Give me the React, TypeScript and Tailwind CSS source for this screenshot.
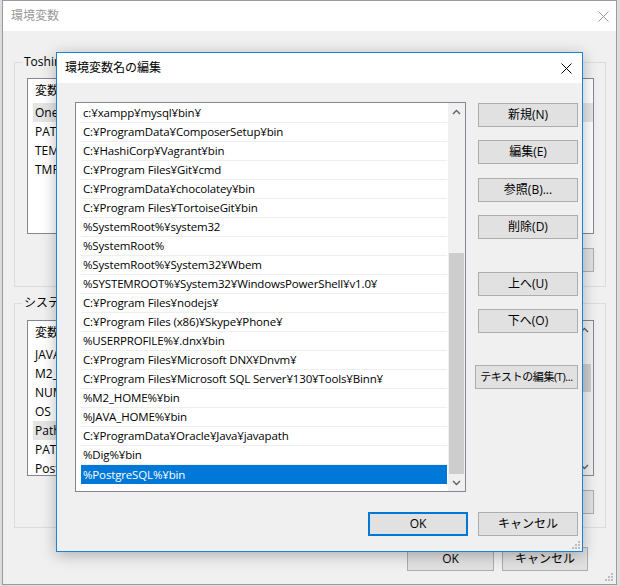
import React from "react";

const paths = [
  "c:¥xampp¥mysql¥bin¥",
  "C:¥ProgramData¥ComposerSetup¥bin",
  "C:¥HashiCorp¥Vagrant¥bin",
  "C:¥Program Files¥Git¥cmd",
  "C:¥ProgramData¥chocolatey¥bin",
  "C:¥Program Files¥TortoiseGit¥bin",
  "%SystemRoot%¥system32",
  "%SystemRoot%",
  "%SystemRoot%¥System32¥Wbem",
  "%SYSTEMROOT%¥System32¥WindowsPowerShell¥v1.0¥",
  "C:¥Program Files¥nodejs¥",
  "C:¥Program Files (x86)¥Skype¥Phone¥",
  "%USERPROFILE%¥.dnx¥bin",
  "C:¥Program Files¥Microsoft DNX¥Dnvm¥",
  "C:¥Program Files¥Microsoft SQL Server¥130¥Tools¥Binn¥",
  "%M2_HOME%¥bin",
  "%JAVA_HOME%¥bin",
  "C:¥ProgramData¥Oracle¥Java¥javapath",
  "%Dig%¥bin",
  "%PostgreSQL%¥bin",
];

const F = "font-['Open_Sans','Noto_Sans_CJK_JP',sans-serif]";

function CloseX({ color }: { color: string }) {
  return (
    <svg width="11" height="11" viewBox="0 0 11 11">
      <path d="M0.5 0.5 L10.5 10.5 M10.5 0.5 L0.5 10.5" stroke={color} strokeWidth="1" />
    </svg>
  );
}

function Chevron({ up }: { up?: boolean }) {
  return (
    <svg width="9" height="6" viewBox="0 0 9 6">
      <path
        d={up ? "M1 5 L4.5 1.5 L8 5" : "M1 1 L4.5 4.5 L8 1"}
        stroke="#606060"
        strokeWidth="1.4"
        fill="none"
      />
    </svg>
  );
}

function Grip() {
  return (
    <svg width="8" height="8" viewBox="0 0 8 8">
      {[
        [6, 0],
        [6, 3],
        [3, 3],
        [6, 6],
        [3, 6],
        [0, 6],
      ].map(([x, y], i) => (
        <rect key={i} x={x} y={y} width="2" height="2" fill="#bdbdbd" />
      ))}
    </svg>
  );
}

function WinButton({
  label,
  className = "",
}: {
  label: string;
  className?: string;
}) {
  return (
    <div
      className={`h-[24px] flex items-center justify-center bg-[#e1e1e1] border border-[#adadad] text-black whitespace-nowrap ${className}`}
    >
      {label}
    </div>
  );
}

function BgList({
  rows,
  hi,
  scroll,
}: {
  rows: string[];
  hi: number;
  scroll?: boolean;
}) {
  return (
    <div className="h-[156px] border border-[#828790] bg-white flex overflow-hidden">
      <div className="flex-1 pl-[5px] flex flex-col">
        <div className="h-[24px] flex items-center pl-[2px] text-[12px] shrink-0">
          <span className="w-[190px]">変数</span>
          <span>値</span>
        </div>
        {rows.map((r, i) => (
          <div
            key={i}
            className={`h-[19px] shrink-0 flex items-center pl-[2px] text-[12px] ${
              i === hi ? "bg-[#e5e5e5]" : ""
            }`}
          >
            {r}
          </div>
        ))}
      </div>
      {scroll && (
        <div className="w-[17px] bg-[#f0f0f0] flex flex-col">
          <div className="h-[17px] flex items-center justify-center">
            <Chevron up />
          </div>
          <div className="flex-1 px-[2px] pt-[26px]">
            <div className="h-[28px] bg-[#cdcdcd]" />
          </div>
          <div className="h-[17px] flex items-center justify-center">
            <Chevron />
          </div>
        </div>
      )}
    </div>
  );
}

export default function App() {
  return (
    <div
      className={`relative w-[620px] h-[586px] overflow-hidden bg-[#dcdcdc] pl-[2px] ${F}`}
    >
      {/* background window */}
      <div className="w-[615px] h-[585px] border border-[#9a9a9a] bg-[#f0f0f0] flex flex-col relative">
        <div className="h-[30px] shrink-0 bg-white flex items-center justify-between pl-[8px] pr-[7px]">
          <span className="text-[12px] text-[#9a9a9a]">環境変数</span>
          <CloseX color="#9a9a9a" />
        </div>

        {/* group 1 */}
        <div className="relative mt-[31px] ml-[11px] mr-[10px] border border-[#dcdcdc] pt-[15px] pl-[12px] pr-[11px] pb-[14px]">
          <span className="absolute -top-[9px] left-[7px] px-[2px] bg-[#f0f0f0] text-[12px] leading-[16px]">
            Toshinori のユーザー環境変数(U)
          </span>
          <BgList rows={["OneDrive", "PATH", "TEMP", "TMP"]} hi={0} />
          <div className="mt-[14px] flex justify-end gap-[10px]">
            <WinButton label="新規(N)..." className="w-[86px] text-[12px]" />
            <WinButton label="編集(E)..." className="w-[86px] text-[12px]" />
            <WinButton label="削除(D)" className="w-[86px] text-[12px]" />
          </div>
        </div>

        {/* group 2 */}
        <div className="relative mt-[16px] ml-[11px] mr-[10px] border border-[#dcdcdc] pt-[16px] pl-[12px] pr-[11px] pb-[13px]">
          <span className="absolute -top-[9px] left-[7px] px-[2px] bg-[#f0f0f0] text-[12px] leading-[16px]">
            システム環境変数(S)
          </span>
          <BgList
            rows={[
              "JAVA_HOME",
              "M2_HOME",
              "NUMBER_OF_PROCESSORS",
              "OS",
              "Path",
              "PATHEXT",
              "PostgreSQL",
            ]}
            hi={4}
            scroll
          />
          <div className="mt-[14px] flex justify-end gap-[10px]">
            <WinButton label="新規(W)..." className="w-[86px] text-[12px]" />
            <WinButton label="編集(I)..." className="w-[86px] text-[12px]" />
            <WinButton label="削除(L)" className="w-[86px] text-[12px]" />
          </div>
        </div>

        <div className="mt-[19px] flex justify-end gap-[8px] pr-[28px]">
          <WinButton label="OK" className="w-[87px] h-[23px] text-[12px]" />
          <WinButton label="キャンセル" className="w-[86px] h-[23px] text-[12px]" />
        </div>
        <div className="absolute right-[3px] bottom-[3px]">
          <Grip />
        </div>
      </div>

      {/* front dialog */}
      <div className="absolute left-[56px] top-[52px] w-[527px] h-[500px] border border-[#1883d7] bg-[#f0f0f0] flex flex-col shadow-[0_3px_14px_rgba(0,0,0,0.28)]">
        <div className="h-[30px] shrink-0 bg-white flex items-center justify-between pl-[8px] pr-[10px]">
          <span className="text-[12px] text-black">環境変数名の編集</span>
          <CloseX color="#000000" />
        </div>
        <div className="flex-1 flex flex-col pl-[18px] pt-[19px]">
          <div className="flex">
            {/* list */}
            <div className="w-[391px] h-[390px] border border-[#828790] bg-white flex">
              <div className="flex-1 pl-[5px] pr-[1px] pt-[1px] flex flex-col overflow-hidden">
                {paths.map((p, i) => {
                  const sel = i === paths.length - 1;
                  return (
                    <div
                      key={i}
                      className={`h-[19px] shrink-0 flex items-center pl-[2px] text-[11.5px] tracking-[-0.15px] whitespace-nowrap ${
                        sel
                          ? "bg-[#0078d7] text-white"
                          : "border-b border-[#efefef] text-black"
                      }`}
                    >
                      {p}
                    </div>
                  );
                })}
              </div>
              <div className="w-[17px] bg-[#f0f0f0] flex flex-col">
                <div className="h-[17px] shrink-0 flex items-center justify-center">
                  <Chevron up />
                </div>
                <div className="flex-1 flex flex-col justify-end px-[1px]">
                  <div className="h-[221px] bg-[#cdcdcd]" />
                </div>
                <div className="h-[17px] shrink-0 flex items-center justify-center">
                  <Chevron />
                </div>
              </div>
            </div>

            {/* right buttons */}
            <div className="ml-[12px] w-[100px] flex flex-col">
              <WinButton label="新規(N)" className="mt-[1px] text-[12px]" />
              <WinButton label="編集(E)" className="mt-[13px] text-[12px]" />
              <WinButton label="参照(B)..." className="mt-[14px] text-[12px]" />
              <WinButton label="削除(D)" className="mt-[13px] text-[12px]" />
              <WinButton label="上へ(U)" className="mt-[33px] text-[12px]" />
              <WinButton label="下へ(O)" className="mt-[13px] text-[12px]" />
              <WinButton
                label="テキストの編集(T)..."
                className="mt-[32px] -ml-[3px] text-[11px] tracking-[-0.4px]"
              />
            </div>
          </div>

          <div className="mt-[20px] flex justify-end gap-[10px] pr-[4px]">
            <div className="w-[100px] h-[24px] flex items-center justify-center bg-[#e1e1e1] border-2 border-[#0078d7] text-[12px] text-black">
              OK
            </div>
            <WinButton label="キャンセル" className="w-[100px] text-[12px]" />
          </div>
        </div>
        <div className="absolute right-[2px] bottom-[2px]">
          <Grip />
        </div>
      </div>
    </div>
  );
}
